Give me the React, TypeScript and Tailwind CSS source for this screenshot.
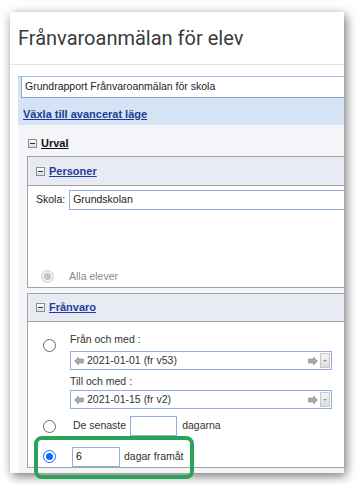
import React from "react";

const ui = { fontFamily: '"Liberation Sans", Arial, sans-serif' };

function Minus() {
  return (
    <span className="inline-flex h-[9px] w-[9px] items-center justify-center border border-[#8c8c8c] bg-gradient-to-b from-white to-[#dcdcdc]">
      <span className="h-[1px] w-[5px] bg-[#333]" />
    </span>
  );
}

function Radio({ state }: { state: "off" | "on" | "disabled" }) {
  if (state === "on")
    return (
      <span className="inline-flex h-[13px] w-[13px] items-center justify-center rounded-full border border-[#0a6cff] bg-white">
        <span className="h-[7px] w-[7px] rounded-full bg-[#0a6cff]" />
      </span>
    );
  if (state === "disabled")
    return (
      <span className="inline-flex h-[13px] w-[13px] items-center justify-center rounded-full border border-[#cfcfcf] bg-[#f0f0f0]">
        <span className="h-[7px] w-[7px] rounded-full bg-[#c4c4c4]" />
      </span>
    );
  return <span className="inline-block h-[13px] w-[13px] rounded-full border border-[#666] bg-white" />;
}

function Arrow({ dir }: { dir: "l" | "r" }) {
  return (
    <svg width="10" height="10" viewBox="0 0 10 10" className="shrink-0">
      {dir === "l" ? (
        <path d="M0.5 5 L4.5 1 L4.5 3 L9.5 3 L9.5 7 L4.5 7 L4.5 9 Z" fill="#a9a9a9" stroke="#8a8a8a" strokeWidth="0.6" />
      ) : (
        <path d="M9.5 5 L5.5 1 L5.5 3 L0.5 3 L0.5 7 L5.5 7 L5.5 9 Z" fill="#a9a9a9" stroke="#8a8a8a" strokeWidth="0.6" />
      )}
    </svg>
  );
}

function DateSelect({ text }: { text: string }) {
  return (
    <div className="flex h-[19px] w-[262px] items-center border border-[#8fb0de] bg-white pl-[3px] pr-[1px]">
      <Arrow dir="l" />
      <span className="ml-[3px] flex-1 text-[10.5px] text-[#333]">{text}</span>
      <Arrow dir="r" />
      <span className="ml-[2px] flex h-[15px] w-[10px] items-center justify-center border border-[#c9c9c9] bg-gradient-to-b from-[#f4f4f4] to-[#dedede]">
        <span className="h-0 w-0 border-x-[2px] border-t-[2px] border-x-transparent border-t-[#999]" />
      </span>
    </div>
  );
}

export default function App() {
  return (
    <div className="relative h-[484px] w-[358px] overflow-hidden bg-white" style={ui}>
      <div className="ml-[10px] mt-[12px] h-[461px] w-[334px] overflow-hidden bg-white shadow-[2px_3px_10px_rgba(0,0,0,0.55)]">
        <div className="flex h-[52px] items-center pl-[8px]">
          <h1 className="text-[20px] leading-none text-[#3a3a3a]" style={{ fontFamily: "Roboto, sans-serif" }}>
            Frånvaroanmälan för elev
          </h1>
        </div>
        <div className="h-px bg-[#e4e4e4]" />
        <div className="ml-[8px] mt-[11px] bg-[#f4f5f9] pb-[40px]">
          <div className="h-[49px] border-t border-[#a9c1e6] bg-[#d5e3f5]">
            <div className="ml-[3px] flex h-[21px] items-center border-b border-l border-[#8aa8d4] bg-white pl-[3px] text-[10.5px] text-[#222]">
              Grundrapport Frånvaroanmälan för skola
            </div>
            <div className="pl-[5px] pt-[8px] text-[11px] font-bold text-[#1d3e96] underline">Växla till avancerat läge</div>
          </div>
          <div className="flex h-[31px] items-center gap-[4px] pl-[10px] pt-[6px]">
            <Minus />
            <span className="text-[11px] font-bold text-[#111] underline">Urval</span>
          </div>
          <div className="ml-[9px] border-y border-l border-[#a3a3a3] bg-white">
            <div className="flex h-[29px] items-center gap-[4px] border-b border-[#a3a3a3] bg-[#e9ebf2] pl-[8px]">
              <Minus />
              <span className="text-[11px] font-bold text-[#1f3fa0] underline">Personer</span>
            </div>
            <div className="flex h-[27px] items-center pl-[8px]">
              <span className="text-[10.5px] text-[#222]">Skola:</span>
              <div className="ml-[4px] flex h-[20px] flex-1 items-center border border-r-0 border-[#8fb0de] pl-[3px] text-[10.5px] text-[#222]">
                Grundskolan
              </div>
            </div>
            <div className="flex h-[74px] items-end gap-[15px] pb-[4px] pl-[13px]">
              <Radio state="disabled" />
              <span className="text-[10.5px] leading-[14px] text-[#8a8a8a]">Alla elever</span>
            </div>
          </div>
          <div className="ml-[9px] mt-[5px] border-y border-l border-[#a3a3a3] bg-white">
            <div className="flex h-[28px] items-center gap-[4px] border-b border-[#a3a3a3] bg-[#e9ebf2] pl-[8px]">
              <Minus />
              <span className="text-[11px] font-bold text-[#1f3fa0] underline">Frånvaro</span>
            </div>
            <div className="flex pl-[15px] pt-[10px]">
              <div className="pt-[3px]">
                <Radio state="off" />
              </div>
              <div className="ml-[14px] flex flex-col">
                <span className="h-[19px] text-[10.5px] leading-[14px] text-[#333]">Från och med :</span>
                <DateSelect text="2021-01-01 (fr v53)" />
                <span className="mt-[4px] h-[16px] text-[10.5px] leading-[14px] text-[#333]">Till och med :</span>
                <DateSelect text="2021-01-15 (fr v2)" />
              </div>
            </div>
            <div className="mt-[7px] flex h-[20px] items-center pl-[15px]">
              <Radio state="off" />
              <span className="ml-[17px] text-[10.5px] text-[#333]">De senaste</span>
              <span className="ml-[4px] h-[20px] w-[47px] border border-[#8fb0de] bg-white" />
              <span className="ml-[5px] text-[10.5px] text-[#333]">dagarna</span>
            </div>
            <div className="mt-[10px] flex h-[21px] items-center pl-[15px]">
              <Radio state="on" />
              <span className="ml-[16px] flex h-[20px] w-[48px] items-center border border-[#8fb0de] bg-white pl-[3px] text-[10.5px] text-[#111]">
                6
              </span>
              <span className="ml-[4px] text-[10.5px] text-[#333]">dagar framåt</span>
            </div>
          </div>
        </div>
      </div>
      <div className="absolute left-[34px] top-[436px] h-[43px] w-[160px] rounded-[8px] border-[4px] border-[#27a35a]" />
    </div>
  );
}
